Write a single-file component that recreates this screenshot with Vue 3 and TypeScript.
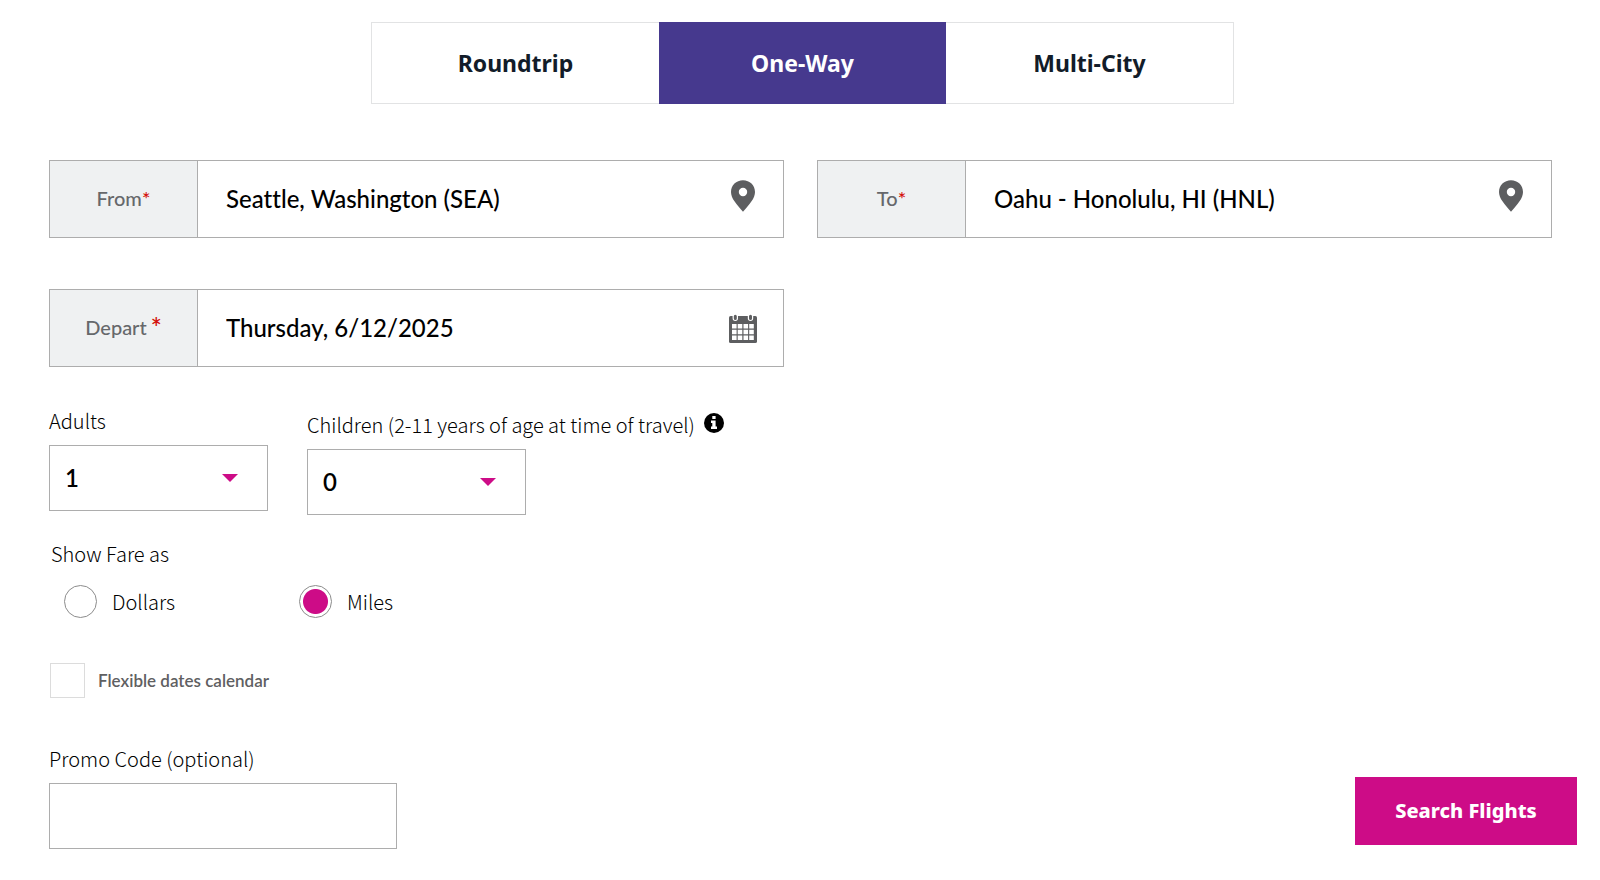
<script setup lang="ts">
import { ref } from 'vue'

type Trip = 'Roundtrip' | 'One-Way' | 'Multi-City'

const trips: Trip[] = ['Roundtrip', 'One-Way', 'Multi-City']
const trip = ref<Trip>('One-Way')
const origin = ref('Seattle, Washington (SEA)')
const destination = ref('Oahu - Honolulu, HI (HNL)')
const depart = ref('Thursday, 6/12/2025')
const adults = ref(1)
const children = ref(0)
const fare = ref<'Dollars' | 'Miles'>('Miles')
const fares: Array<'Dollars' | 'Miles'> = ['Dollars', 'Miles']
const flexible = ref(false)
const promo = ref('')
</script>

<template>
  <main class="page">
    <nav class="tabs" aria-label="Trip type">
      <button
        v-for="t in trips"
        :key="t"
        type="button"
        class="tab"
        :class="{ active: trip === t }"
        :aria-pressed="trip === t"
        @click="trip = t"
      >
        {{ t }}
      </button>
    </nav>

    <form class="search" @submit.prevent>
      <div class="fields">
        <div class="field">
          <label for="from">From<span class="star">*</span></label>
          <input id="from" v-model="origin" type="text" />
          <svg class="icon" viewBox="0 0 30 40" aria-hidden="true">
            <path
              fill-rule="evenodd"
              d="M15 1.2C8.2 1.2 3 6.3 3 12.9c0 3.2 1.4 6.200 3.300 9.100C8.700 25.700 12.200 29.600 15 32.800c2.800-3.200 6.300-7.100 8.700-10.800C25.600 19.100 27 16.100 27 12.900 27 6.300 21.800 1.200 15 1.200zm0 7.600a4.200 4.200 0 1 1 0 8.400 4.200 4.200 0 0 1 0-8.400z"
            />
          </svg>
        </div>
        <div class="field">
          <label for="to">To<span class="star">*</span></label>
          <input id="to" v-model="destination" type="text" />
          <svg class="icon" viewBox="0 0 30 40" aria-hidden="true">
            <path
              fill-rule="evenodd"
              d="M15 1.2C8.2 1.2 3 6.3 3 12.9c0 3.2 1.4 6.200 3.300 9.100C8.700 25.700 12.200 29.600 15 32.800c2.800-3.200 6.300-7.100 8.700-10.800C25.600 19.100 27 16.100 27 12.900 27 6.300 21.800 1.200 15 1.200zm0 7.600a4.200 4.200 0 1 1 0 8.400 4.200 4.200 0 0 1 0-8.400z"
            />
          </svg>
        </div>
        <div class="field">
          <label for="depart">Depart<span class="star large">*</span></label>
          <input id="depart" v-model="depart" type="text" />
          <svg class="icon" viewBox="0 0 30 40" aria-hidden="true">
            <rect x="1" y="8" width="28" height="27" rx="1.600" />
            <path
              fill="#fff"
              d="M4 16h4.600v4.600H4zM9.700 16h4.600v4.600H9.700zM15.500 16h4.600v4.600h-4.600zM21.200 16h4.600v4.600h-4.600zM4 21.700h4.600v4.600H4zM9.700 21.700h4.600v4.600H9.700zM15.500 21.700h4.600v4.600h-4.600zM21.200 21.700h4.600v4.600h-4.600zM4 27.400h4.600V32H4zM9.700 27.400h4.600V32H9.700zM15.500 27.400h4.600V32h-4.600zM21.200 27.400h4.600V32h-4.600z"
            />
            <path d="M7.300 7v3.300M22.500 7v3.300" stroke="#fff" stroke-width="5.400" stroke-linecap="round" />
            <path d="M7.300 8.300v2.200M22.500 8.300v2.200" stroke="#5d5e60" stroke-width="3" stroke-linecap="round" />
          </svg>
        </div>
      </div>

      <div class="travelers">
        <div class="traveler">
          <label class="caption" for="adults">Adults</label>
          <div class="select">
            <select id="adults" v-model.number="adults">
              <option v-for="n in 7" :key="n" :value="n">{{ n }}</option>
            </select>
            <svg class="caret" viewBox="0 0 16 8" aria-hidden="true"><path d="M0 0h16L8 8z" /></svg>
          </div>
        </div>
        <div class="traveler">
          <div class="with-info">
            <label class="caption" for="children">Children (2-11 years of age at time of travel)</label>
            <button type="button" class="info" aria-label="About child fares">
              <svg viewBox="0 0 20 20" aria-hidden="true">
                <circle cx="10" cy="10" r="10" />
                <path fill="#fff" d="M8.300 3h3.300v2.900H8.300zM7 7.500h4.600v6H13V16H7v-2.500h1.300V10H7z" />
              </svg>
            </button>
          </div>
          <div class="select">
            <select id="children" v-model.number="children">
              <option v-for="n in 8" :key="n" :value="n - 1">{{ n - 1 }}</option>
            </select>
            <svg class="caret" viewBox="0 0 16 8" aria-hidden="true"><path d="M0 0h16L8 8z" /></svg>
          </div>
        </div>
      </div>

      <fieldset class="fare">
        <legend class="caption">Show Fare as</legend>
        <div class="radios">
          <label v-for="f in fares" :key="f" class="caption radio">
            <input v-model="fare" type="radio" name="fare" :value="f" />{{ f }}
          </label>
        </div>
      </fieldset>

      <label class="flexible">
        <input v-model="flexible" type="checkbox" />Flexible dates calendar
      </label>

      <div class="bottom">
        <div class="promo">
          <label class="caption" for="promo">Promo Code (optional)</label>
          <input id="promo" v-model="promo" type="text" />
        </div>
        <button type="submit" class="submit">Search Flights</button>
      </div>
    </form>
  </main>
</template>

<style>
body {
  background: #fff;
}
</style>

<style scoped>
.page {
  --bold: 'Noto Sans', 'Open Sans', sans-serif;
  --light: 'Noto Sans CJK SC', 'Noto Sans', sans-serif;
  --medium: Lato, 'Noto Sans', sans-serif;
  --line: #adadad;
  --pink: #cd0c87;
  padding: 22px 0 0 5px;
  color: #000;
  font-variant-ligatures: none;
}
.page *,
.page {
  box-sizing: border-box;
}
button,
input,
select {
  margin: 0;
  color: inherit;
}
button {
  cursor: pointer;
}
.tabs {
  display: flex;
  width: 100%;
  max-width: 863px;
  margin: 0 auto;
  border: 1px solid #e2e3e4;
}
.tab {
  flex: 1;
  height: 80px;
  border: 0;
  background: #fff;
  color: #121c29;
  font: 700 23px/32px var(--bold);
}
.tab.active {
  margin: -1px 0;
  height: 82px;
  background: #46398e;
  color: #fff;
}
.search {
  padding: 56px 23px 31px 44px;
}
.fields {
  display: grid;
  grid-template-columns: 1fr 1fr;
  gap: 51px 33px;
  margin-right: 25px;
}
.field {
  display: flex;
  align-items: center;
  height: 78px;
  border: 1px solid var(--line);
  padding-right: 25px;
}
.field label {
  display: flex;
  align-items: center;
  justify-content: center;
  align-self: stretch;
  flex: none;
  width: 148px;
  padding-bottom: 2px;
  border-right: 1px solid var(--line);
  background: #eff1f2;
  color: #66686b;
  font: 500 20px/28px var(--medium);
}
.star {
  color: #d4110c;
}
.star.large {
  margin-left: 4px;
  font-size: 26px;
  font-weight: 600;
}
.field input {
  flex: 1;
  min-width: 0;
  height: 100%;
  padding: 0 28px 2px;
  border: 0;
  background: none;
  font: 500 24px/32px var(--medium);
  font-variant-ligatures: none;
}
.icon {
  flex: none;
  width: 30px;
  height: 40px;
  fill: #5d5e60;
}
.caption {
  font: 300 20px/28px var(--light);
}
.travelers {
  display: flex;
  gap: 39px;
  margin-top: 40px;
}
.traveler > .caption,
.promo .caption {
  display: block;
  margin-bottom: 10px;
}
.with-info {
  display: flex;
  align-items: center;
  gap: 9px;
  height: 32px;
  margin-bottom: 10px;
}
.with-info .caption {
  align-self: flex-end;
}
.info {
  width: 20px;
  height: 20px;
  padding: 0;
  border: 0;
  background: none;
}
.info svg {
  display: block;
}
.select {
  position: relative;
  width: 219px;
}
.select select {
  appearance: none;
  display: block;
  width: 100%;
  height: 66px;
  padding: 0 48px 0 15px;
  border: 1px solid var(--line);
  border-radius: 0;
  background: #fff;
  font: 600 24px/32px var(--medium);
}
.caret {
  position: absolute;
  top: 29px;
  right: 30px;
  width: 16px;
  height: 8px;
  fill: var(--pink);
  pointer-events: none;
}
.fare {
  margin: 25px 0 0;
  padding: 0 0 0 2px;
  border: 0;
}
.fare legend {
  padding: 0;
}
.radios {
  display: flex;
  margin: 17px 0 0 13px;
}
.radio {
  display: flex;
  align-items: center;
  gap: 15px;
  width: 235px;
}
.radio input {
  appearance: none;
  width: 33px;
  height: 33px;
  border: 1px solid #8c8c8c;
  border-radius: 50%;
  background: #fff;
}
.radio input:checked {
  background: radial-gradient(circle, var(--pink) 12px, #fff 13px);
}
.flexible {
  display: flex;
  align-items: center;
  gap: 13px;
  width: max-content;
  margin: 45px 0 0 1px;
  color: #5f6062;
  font: 600 17px/24px var(--medium);
}
.flexible input {
  appearance: none;
  width: 35px;
  height: 35px;
  border: 1px solid #dcdcdc;
  background: #fff;
}
.flexible input:checked {
  background: var(--pink);
  box-shadow: inset 0 0 0 6px #fff;
}
.bottom {
  display: flex;
  align-items: flex-end;
  justify-content: space-between;
  margin-top: 47px;
}
.promo input {
  display: block;
  width: 348px;
  height: 66px;
  padding: 0 16px;
  border: 1px solid var(--line);
  font: 500 24px/32px var(--medium);
}
.submit {
  width: 222px;
  height: 68px;
  margin-bottom: 4px;
  border: 0;
  background: var(--pink);
  color: #fff;
  font: 800 20px/28px var(--bold);
}
</style>
